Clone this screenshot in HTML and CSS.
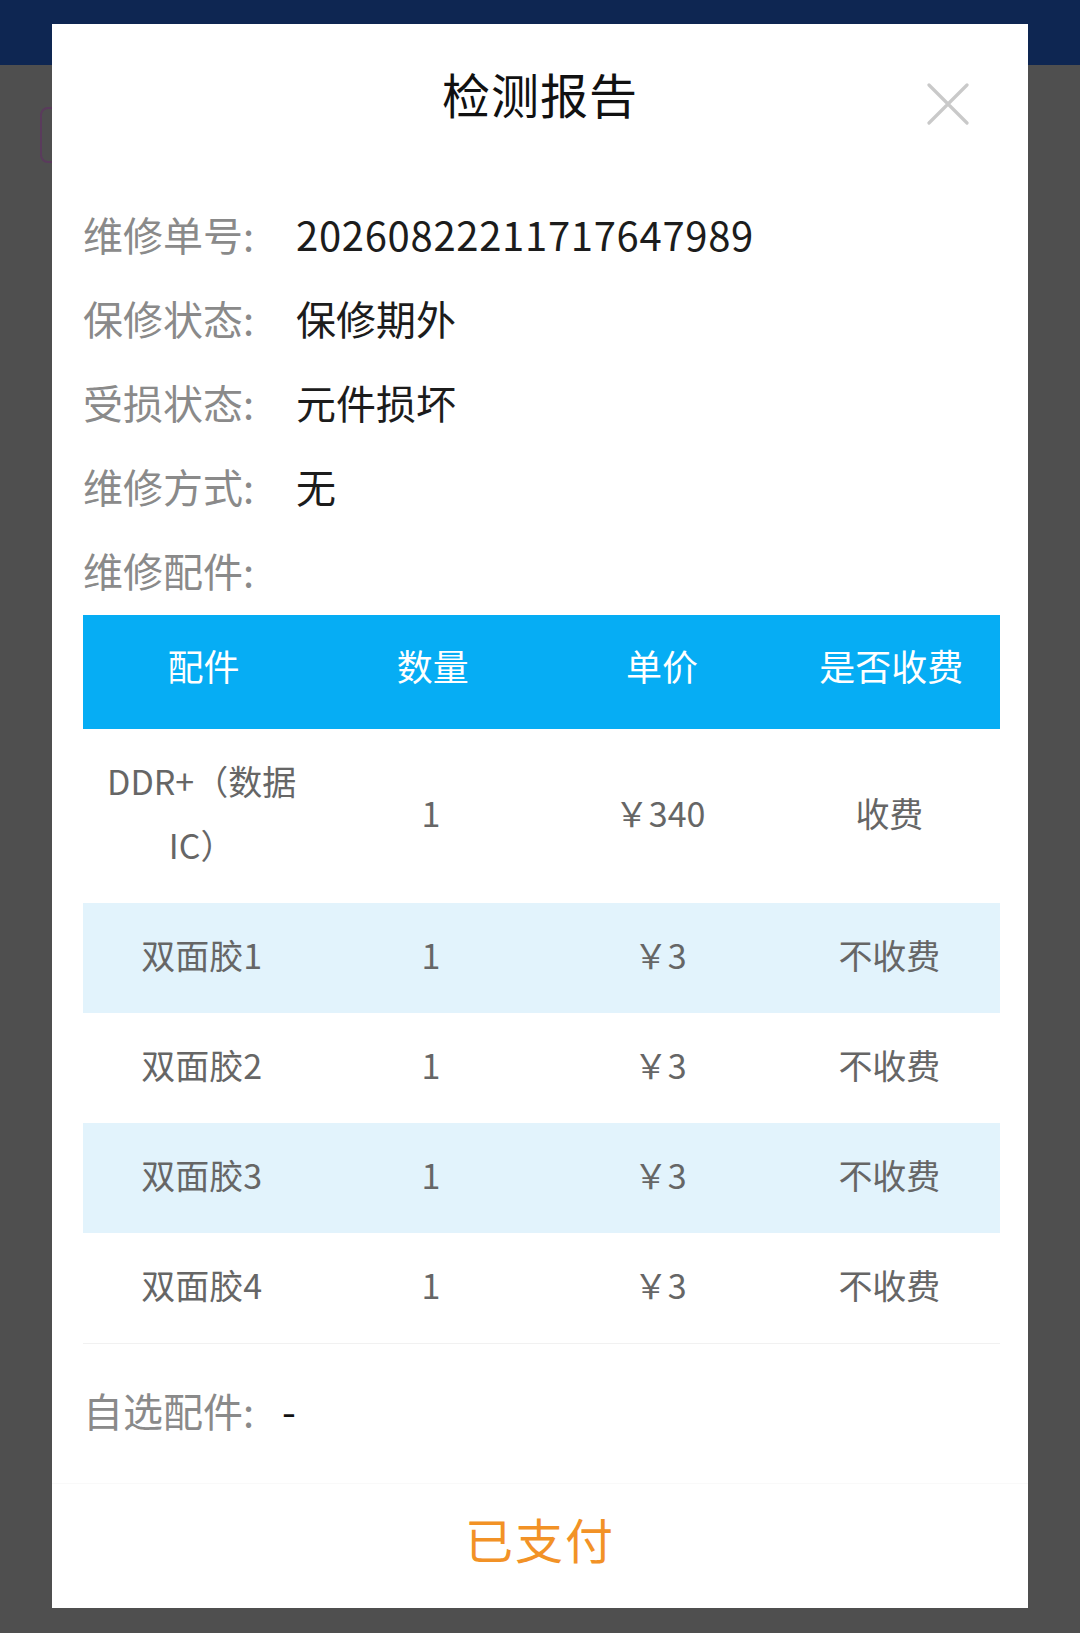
FILE: index.html
```html
<!DOCTYPE html>
<html lang="zh-CN">
<head>
    <meta charset="UTF-8">
    <meta name="viewport" content="width=device-width, initial-scale=1.0">
    <title>检测报告</title>
    <link rel="stylesheet" href="styles.css">
</head>
<body>

<div class="page">
    <div class="page-bar"></div>
    <div class="page-body">
        <div class="page-tag"></div>
    </div>
</div>

<div class="report">
    <div class="report-head">
        <div class="report-title">检测报告</div>
        <button class="report-close" aria-label="关闭">
            <svg width="42" height="42" viewBox="0 0 42 42">
                <path d="M2 2 L40 40 M40 2 L2 40" stroke="#c9c9c9" stroke-width="3.2" stroke-linecap="round" fill="none"/>
            </svg>
        </button>
    </div>

    <div class="report-body">
        <div class="info-row">
            <span class="info-label">维修单号:</span>
            <span class="info-value number">20260822211717647989</span>
        </div>
        <div class="info-row">
            <span class="info-label">保修状态:</span>
            <span class="info-value">保修期外</span>
        </div>
        <div class="info-row">
            <span class="info-label">受损状态:</span>
            <span class="info-value">元件损坏</span>
        </div>
        <div class="info-row">
            <span class="info-label">维修方式:</span>
            <span class="info-value">无</span>
        </div>
        <div class="info-row">
            <span class="info-label">维修配件:</span>
        </div>

        <table class="parts">
            <thead>
                <tr>
                    <th>配件</th>
                    <th>数量</th>
                    <th>单价</th>
                    <th>是否收费</th>
                </tr>
            </thead>
            <tbody>
                <tr>
                    <td>DDR+（数据IC）</td>
                    <td>1</td>
                    <td>￥340</td>
                    <td>收费</td>
                </tr>
                <tr>
                    <td>双面胶1</td>
                    <td>1</td>
                    <td>￥3</td>
                    <td>不收费</td>
                </tr>
                <tr>
                    <td>双面胶2</td>
                    <td>1</td>
                    <td>￥3</td>
                    <td>不收费</td>
                </tr>
                <tr>
                    <td>双面胶3</td>
                    <td>1</td>
                    <td>￥3</td>
                    <td>不收费</td>
                </tr>
                <tr>
                    <td>双面胶4</td>
                    <td>1</td>
                    <td>￥3</td>
                    <td>不收费</td>
                </tr>
            </tbody>
        </table>

        <div class="info-row extra">
            <span class="info-label">自选配件:</span>
            <span class="info-value dash">-</span>
        </div>
    </div>

    <div class="report-foot">已支付</div>
</div>

</body>
</html>
```

FILE: styles.css
```css
html, body {
    margin: 0;
    padding: 0;
}
body {
    width: 1080px;
    height: 1633px;
    overflow: hidden;
    position: relative;
    background-color: #4f4f4f;
    font-family: "Noto Sans CJK SC", "Noto Sans", sans-serif;
}
.page-bar {
    height: 65px;
    background-color: #0e2652;
}
.page-body {
    padding: 42px 0 0 40px;
}
.page-tag {
    width: 60px;
    height: 52px;
    border: 2px solid #5a3b5c;
    border-radius: 8px;
}

/* modal */
.report {
    position: absolute;
    left: 52px;
    top: 24px;
    width: 976px;
    height: 1584px;
    background-color: #fff;
    display: flex;
    flex-direction: column;
}
.report-head {
    position: relative;
    box-sizing: border-box;
    height: 146px;
    padding-bottom: 8px;
    display: flex;
    align-items: center;
    justify-content: center;
}
.report-title {
    font-size: 48px;
    color: #111;
    letter-spacing: 1px;
}
.report-close {
    position: absolute;
    right: 59px;
    top: 59px;
    width: 42px;
    height: 42px;
    padding: 0;
    border: none;
    background: none;
    display: flex;
}
.report-body {
    padding: 25px 28px 0 31px;
}
.info-row {
    box-sizing: border-box;
    display: flex;
    align-items: center;
    height: 84px;
    padding-bottom: 6px;
    font-size: 40px;
}
.info-label {
    width: 213px;
    flex-shrink: 0;
    color: #8a8a8a;
}
.info-value {
    color: #1c1c1c;
}
.info-value.number {
    letter-spacing: 0.7px;
}
.info-value.dash {
    margin-left: -14px;
    color: #111;
}

/* parts table */
.parts {
    width: 100%;
    border-collapse: collapse;
    table-layout: fixed;
    border-bottom: 1px solid #f1f1f1;
}
.parts th {
    height: 100px;
    padding: 0 10px 14px 22px;
    background-color: #06adf4;
    color: #fff;
    font-size: 36px;
    font-weight: normal;
    text-align: center;
}
.parts td {
    padding: 20px 12px 26px 20px;
    font-size: 34px;
    line-height: 64px;
    color: #666;
    text-align: center;
}
.parts tbody tr:nth-child(even) td {
    background-color: #e2f3fc;
}
.extra {
    margin-top: 27px;
}

.report-foot {
    box-sizing: border-box;
    margin-top: auto;
    height: 125px;
    padding-bottom: 16px;
    border-top: 1px solid #f9f9f9;
    display: flex;
    align-items: center;
    justify-content: center;
    font-size: 48px;
    color: #f29226;
    letter-spacing: 2px;
}
```
